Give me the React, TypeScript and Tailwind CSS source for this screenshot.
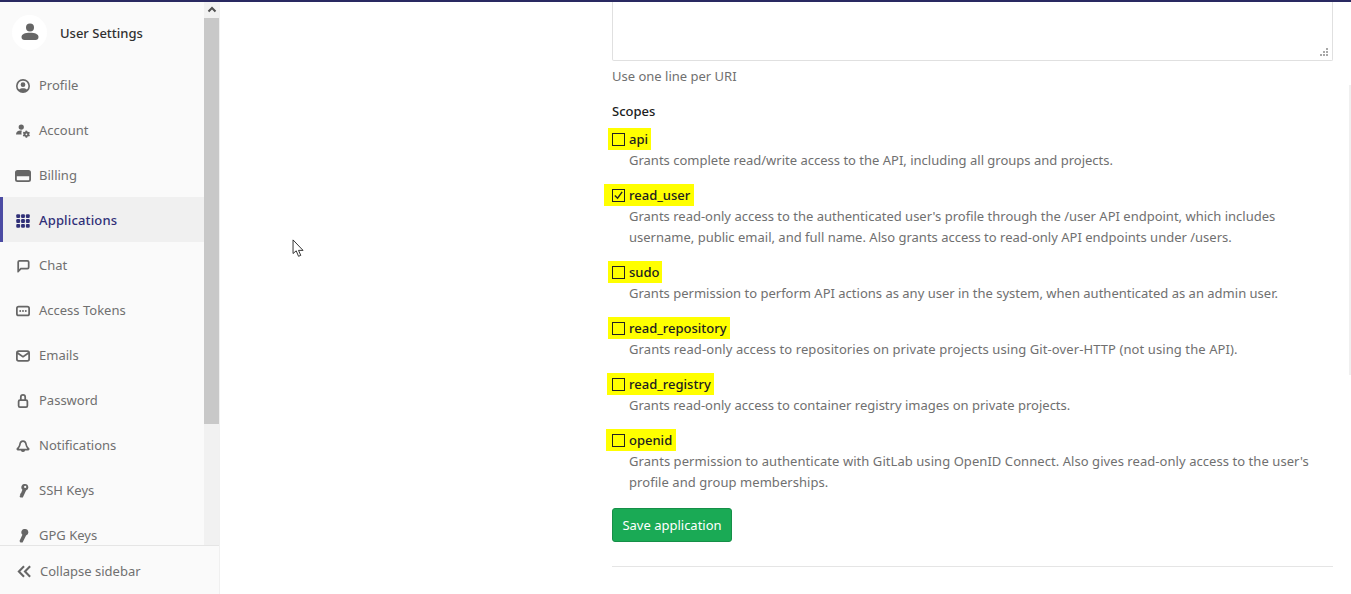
import type { ReactNode } from 'react';

const navIcon = 'h-[14px] w-[14px] shrink-0 fill-current';

const icons: Record<string, ReactNode> = {
  profile: (
    <svg viewBox="0 0 16 16" className={navIcon}>
      <path fillRule="evenodd" d="M8 0a8 8 0 1 1 0 16A8 8 0 0 1 8 0zm0 2a6 6 0 0 0-4.400 10.100C4.700 11.100 6.200 10.600 8 10.600s3.300.5 4.400 1.500A6 6 0 0 0 8 2zM8 3.800a2.700 2.700 0 1 1 0 5.400 2.700 2.700 0 0 1 0-5.400z" />
    </svg>
  ),
  account: (
    <svg viewBox="0 0 16 16" className={navIcon}>
      <circle cx="6" cy="3.500" r="3" />
      <path d="M0 12c0-2.600 2.200-4.500 5-4.500.7 0 1.300.1 1.800.3-.6 1.200-.8 2.800-.3 4.200H0z" />
      <path fillRule="evenodd" d="M11 7.500l1.700.1.300 1.100.9.500 1.100-.3.900 1.300-.8.900v1l.8.900-.9 1.300-1.100-.3-.9.500-.3 1.100H11l-.3-1.100-.9-.500-1.100.3-.9-1.300.8-.9v-1l-.8-.9.9-1.300 1.100.3.900-.5.300-1.100zm.9 3.300a1 1 0 1 0 0 2 1 1 0 0 0 0-2z" />
    </svg>
  ),
  billing: (
    <svg viewBox="0 0 16 16" className="h-4 w-4 shrink-0 -mx-[1px] fill-current">
      <path fillRule="evenodd" d="M2.500 2h11A2.500 2.500 0 0 1 16 4.500v7a2.500 2.500 0 0 1-2.500 2.500h-11A2.500 2.500 0 0 1 0 11.500v-7A2.500 2.500 0 0 1 2.500 2zM1.800 8.300v3.200c0 .4.300.7.700.7h11c.4 0 .7-.3.700-.7V8.300H1.800z" />
    </svg>
  ),
  applications: (
    <svg viewBox="0 0 16 16" className={navIcon}>
      {[2.5, 8, 13.5].map(y =>
        [2.5, 8, 13.5].map(x => <rect key={`${x}-${y}`} x={x - 2.2} y={y - 2.2} width="4.400" height="4.400" rx="1.200" />)
      )}
    </svg>
  ),
  chat: (
    <svg viewBox="0 0 16 16" className={navIcon}>
      <path fillRule="evenodd" d="M4 1h9a2.500 2.500 0 0 1 2.500 2.500v6A2.500 2.500 0 0 1 13 12H6l-3.300 3.300c-.5.400-1.200.1-1.200-.5V3.500A2.500 2.500 0 0 1 4 1zm0 2a.6.600 0 0 0-.5.500v8.200L5.200 10H13a.6.600 0 0 0 .5-.5v-6A.6.600 0 0 0 13 3H4z" />
    </svg>
  ),
  tokens: (
    <svg viewBox="0 0 16 16" className={navIcon}>
      <path fillRule="evenodd" d="M3 2h10a3 3 0 0 1 3 3v6a3 3 0 0 1-3 3H3a3 3 0 0 1-3-3V5a3 3 0 0 1 3-3zm0 2a1 1 0 0 0-1 1v6a1 1 0 0 0 1 1h10a1 1 0 0 0 1-1V5a1 1 0 0 0-1-1H3z" />
      <circle cx="4.800" cy="8" r="1.100" />
      <circle cx="8" cy="8" r="1.100" />
      <circle cx="11.200" cy="8" r="1.100" />
    </svg>
  ),
  emails: (
    <svg viewBox="0 0 16 16" className={navIcon}>
      <path fillRule="evenodd" d="M3 1.500h10a3 3 0 0 1 3 3v7a3 3 0 0 1-3 3H3a3 3 0 0 1-3-3v-7a3 3 0 0 1 3-3zm-.6 2.200L8 7.600l5.600-3.900a1 1 0 0 0-.6-.2H3a1 1 0 0 0-.6.2zM2 6.100v5.400a1 1 0 0 0 1 1h10a1 1 0 0 0 1-1V6.100l-6 4-6-4z" />
    </svg>
  ),
  password: (
    <svg viewBox="0 0 16 16" className={navIcon}>
      <path fillRule="evenodd" d="M8 0a3.500 3.500 0 0 1 3.500 3.500V6A2.500 2.500 0 0 1 14 8.500v5A2.500 2.500 0 0 1 11.500 16h-7A2.500 2.500 0 0 1 2 13.500v-5A2.500 2.500 0 0 1 4.500 6V3.500A3.500 3.500 0 0 1 8 0zm0 2a1.500 1.500 0 0 0-1.500 1.500V6h3V3.500A1.500 1.500 0 0 0 8 2zM4.500 8a.5.500 0 0 0-.5.5v5c0 .3.200.5.500.5h7c.3 0 .5-.2.500-.5v-5a.5.500 0 0 0-.5-.5h-7z" />
    </svg>
  ),
  notifications: (
    <svg viewBox="0 0 16 16" className={navIcon}>
      <path fillRule="evenodd" d="M8 1.500c2.600 0 4 2 4.400 4.200.3 1.800 1.200 3.300 2.600 4.700.9.900.5 2.600-.9 2.600h-3.700a2.500 2.500 0 0 1-4.800 0H1.900c-1.400 0-1.800-1.700-.9-2.600 1.400-1.400 2.300-2.900 2.600-4.700C4 3.500 5.400 1.500 8 1.500zm0 2c-1.400 0-2.200 1.100-2.500 2.600-.3 1.900-1.100 3.500-2.300 4.900h9.600c-1.200-1.400-2-3-2.300-4.900C10.200 4.600 9.400 3.500 8 3.500z" />
    </svg>
  ),
  ssh: (
    <svg viewBox="0 0 16 16" className={navIcon}>
      <path fillRule="evenodd" d="M10.500 0a3.800 3.800 0 0 1 1 7.400L7.800 15.500H5L4 14l1-1.500-.5-1 1.200-1L7.300 6.500A3.800 3.800 0 0 1 10.500 0zm0 2a1.300 1.300 0 1 0 0 2.600 1.300 1.300 0 0 0 0-2.600z" />
    </svg>
  ),
  gpg: (
    <svg viewBox="0 0 16 16" className={navIcon}>
      <path d="M10.500 0a3.800 3.800 0 0 1 1 7.400L7.500 15.500H5L4 13.800 7.300 6.500A3.800 3.800 0 0 1 10.500 0z" />
    </svg>
  ),
};

const navItems = [
  { key: 'profile', label: 'Profile' },
  { key: 'account', label: 'Account' },
  { key: 'billing', label: 'Billing' },
  { key: 'applications', label: 'Applications', active: true },
  { key: 'chat', label: 'Chat' },
  { key: 'tokens', label: 'Access Tokens' },
  { key: 'emails', label: 'Emails' },
  { key: 'password', label: 'Password' },
  { key: 'notifications', label: 'Notifications' },
  { key: 'ssh', label: 'SSH Keys' },
  { key: 'gpg', label: 'GPG Keys' },
];

const scopes = [
  {
    name: 'api',
    box: '-ml-[4px] pl-[4px] pr-[3px]',
    desc: ['Grants complete read/write access to the API, including all groups and projects.'],
  },
  {
    name: 'read_user',
    checked: true,
    box: '-ml-[8px] pl-[8px] pr-[4px]',
    desc: [
      "Grants read-only access to the authenticated user's profile through the /user API endpoint, which includes",
      'username, public email, and full name. Also grants access to read-only API endpoints under /users.',
    ],
  },
  {
    name: 'sudo',
    box: '-ml-[4px] pl-[4px] pr-[3px]',
    desc: ['Grants permission to perform API actions as any user in the system, when authenticated as an admin user.'],
  },
  {
    name: 'read_repository',
    box: '-ml-[4px] pl-[4px] pr-[3px]',
    spacing: 'tracking-[0.09px]',
    desc: ['Grants read-only access to repositories on private projects using Git-over-HTTP (not using the API).'],
  },
  {
    name: 'read_registry',
    box: '-ml-[5px] pl-[5px] pr-[3px]',
    desc: ['Grants read-only access to container registry images on private projects.'],
  },
  {
    name: 'openid',
    box: '-ml-[6px] pl-[6px] pr-[4px]',
    spacing: 'tracking-[0.06px]',
    desc: [
      "Grants permission to authenticate with GitLab using OpenID Connect. Also gives read-only access to the user's",
      'profile and group memberships.',
    ],
  },
];

const App = () => {
  return (
    <div className="relative flex h-[594px] w-[1351px] flex-col overflow-hidden bg-white font-['Noto_Sans',sans-serif] text-[13px]">
      <div className="h-[2px] shrink-0 bg-[#292961]" />
      <div className="flex min-h-0 flex-1">
        <aside className="flex w-[220px] shrink-0 flex-col border-r border-[#f0f0f0] bg-[#fafafa]">
          <div className="flex min-h-0 flex-1">
            <div className="min-w-0 flex-1 overflow-hidden">
              <div className="flex h-[60px] items-center gap-[13px] pl-[12px]">
                <div className="flex h-[35px] w-[35px] items-center justify-center rounded-full bg-white text-[#666666]">
                  <svg viewBox="0 0 20 20" className="h-5 w-5 fill-current">
                    <circle cx="10" cy="5.500" r="4" />
                    <path d="M1.500 15c0-2.800 3.500-4.200 8.500-4.200s8.500 1.400 8.500 4.200c0 2-1.200 3-3 3H4.500c-1.800 0-3-1-3-3z" />
                  </svg>
                </div>
                <span className="mt-[4px] font-medium text-[#303030]">User Settings</span>
              </div>
              {navItems.map(item => (
                <div
                  key={item.key}
                  className={
                    item.active
                      ? 'flex h-[45px] items-center gap-[9px] border-l-[3px] border-[#4b4ba3] bg-[#f0f0f0] pl-[13px] pt-[2px] font-medium tracking-[0.15px] text-[#303078]'
                      : 'flex h-[45px] items-center gap-[9px] pl-[16px] pt-[2px] text-[#707070]'
                  }
                >
                  <span className={item.active ? 'text-[#303078]' : 'text-[#666666]'}>{icons[item.key]}</span>
                  <span>{item.label}</span>
                </div>
              ))}
            </div>
            <div className="flex w-[15px] shrink-0 flex-col bg-[#f1f1f1]">
              <div className="flex h-[16px] shrink-0 items-center justify-center">
                <svg viewBox="0 0 10 10" className="h-[10px] w-[10px]">
                  <path d="M1.500 6.500L5 3l3.500 3.500" fill="none" stroke="#505050" strokeWidth="2" />
                </svg>
              </div>
              <div className="h-[406px] shrink-0 bg-[#c8c8c8]" />
            </div>
          </div>
          <div className="flex h-[49px] shrink-0 items-center gap-[8px] border-t border-[#e5e5e5] pl-[17px] pt-[3px] text-[#707070]">
            <svg viewBox="0 0 16 16" className="h-[15px] w-[15px] shrink-0">
              <path d="M7.500 2.500L2 8l5.500 5.500M14 2.500L8.500 8l5.500 5.500" fill="none" stroke="#666666" strokeWidth="2.200" />
            </svg>
            <span>Collapse sidebar</span>
          </div>
        </aside>
        <main className="min-w-0 flex-1 pl-[392px] pr-[18px]">
          <div className="relative h-[59px] rounded-b-[2px] border border-t-0 border-[#e0e0e0]">
            <svg viewBox="0 0 9 9" className="absolute bottom-[3px] right-[3px] h-[9px] w-[9px] fill-[#a8a8a8]">
              <rect x="6" y="0" width="2" height="2" />
              <rect x="3" y="3" width="2" height="2" />
              <rect x="6" y="3" width="2" height="2" />
              <rect x="0" y="6" width="2" height="2" />
              <rect x="3" y="6" width="2" height="2" />
              <rect x="6" y="6" width="2" height="2" />
            </svg>
          </div>
          <p className="mt-[5px] leading-[20px] text-[#707070]">Use one line per URI</p>
          <h4 className="mt-[15px] leading-[20px] font-medium text-[#202020]">Scopes</h4>
          <div className="mt-[7px] flex flex-col gap-[13px]">
            {scopes.map(scope => (
              <div key={scope.name}>
                <div className={`flex h-[22px] w-fit items-center bg-[#ffff00] ${scope.box}`}>
                  <span className="flex h-[13px] w-[13px] shrink-0 items-center justify-center border border-[#222222]">
                    {scope.checked && (
                      <svg viewBox="0 0 12 12" className="h-[11px] w-[11px]">
                        <path d="M2 6l3 3 5-7" fill="none" stroke="#222222" strokeWidth="1.500" />
                      </svg>
                    )}
                  </span>
                  <span className="ml-[4px] pt-[2px] font-medium text-[#202020]">{scope.name}</span>
                </div>
                <div className={`pl-[17px] leading-[21px] text-[#707070] ${scope.spacing ?? ''}`}>
                  {scope.desc.map(line => (
                    <div key={line} className="whitespace-nowrap">
                      {line}
                    </div>
                  ))}
                </div>
              </div>
            ))}
          </div>
          <button className="mt-[15px] block h-[34px] w-[120px] rounded-[3px] border border-[#168f48] bg-[#1aaa55] pt-[2px] text-white">
            Save application
          </button>
          <div className="mt-[24px] border-t border-[#e5e5e5]" />
        </main>
      </div>
      <svg viewBox="0 0 14 22" className="absolute left-[292px] top-[239px] h-[20px] w-[13px]">
        <path d="M1 1v15l3.500-3 2.500 6 2.500-1-2.500-5.500H12z" fill="white" stroke="#222222" strokeWidth="1" />
      </svg>
      <div className="absolute right-0 top-[85px] h-[290px] w-[2px] bg-[#f0f0f0]" />
    </div>
  );
};

export default App;
